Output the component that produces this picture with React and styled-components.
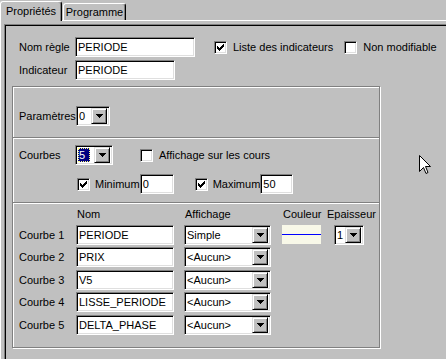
import React from 'react';
import styled, { createGlobalStyle } from 'styled-components';

const GlobalStyle = createGlobalStyle`
body {
  margin: 0;
  font-family: 'Liberation Sans', Arial, sans-serif;
  font-size: 11px;
  color: #000;
}
`;

const Screen = styled.div`
position: relative;
width: 446px;
height: 359px;
overflow: hidden;
background: #c0c0c0;
`;

const TabStrip = styled.div`
position: relative;
z-index: 1;
display: flex;
align-items: flex-end;
height: 20px;
`;

const Tab = styled.div`
box-sizing: border-box;
display: flex;
align-items: center;
justify-content: center;
width: ${(p) => (p.$active ? '62px' : '63px')};
height: ${(p) => (p.$active ? '20px' : '17px')};
margin-bottom: ${(p) => (p.$active ? '-1px' : '0')};
margin-left: ${(p) => (p.$active ? '0' : '1px')};
padding-bottom: ${(p) => (p.$active ? '2px' : '0')};
border-top: 1px solid #fff;
border-left: 1px solid #fff;
border-right: 1px solid #000;
box-shadow: inset -1px 0 0 #808080;
border-radius: 3px 3px 0 0;
background: #c0c0c0;
white-space: nowrap;
`;

const TabPage = styled.div`
border-top: 1px solid #fff;
border-left: 1px solid #fff;
padding: 3px 0 0 3px;
`;

const Sunken = styled.div`
box-sizing: border-box;
width: 470px;
height: 360px;
border: 1px solid;
border-color: #808080 #fff #fff #808080;
box-shadow: inset 1px 1px 0 #000;
padding-top: 12px;
`;

const TopForm = styled.div`
display: flex;
flex-direction: column;
gap: 3px;
padding-left: 14px;
`;

const Row = styled.div`
display: flex;
align-items: center;
height: 20px;
margin-top: ${(p) => p.$mt || 0}px;
padding-left: ${(p) => p.$pl || 0}px;
`;

const Label = styled.span`
width: ${(p) => p.$w}px;
flex: none;
white-space: nowrap;
`;

const Field = styled.div`
box-sizing: border-box;
display: flex;
align-items: center;
width: ${(p) => p.$w}px;
height: 20px;
flex: none;
margin-left: ${(p) => p.$ml || 0}px;
padding-left: 2px;
background: #fff;
border: 1px solid;
border-color: #808080 #fff #fff #808080;
box-shadow: inset 1px 1px 0 #000, inset -1px -1px 0 #dfdfdf;
white-space: nowrap;
overflow: hidden;
`;

const Combo = styled(Field)`
padding: 2px;
`;

const ComboValue = styled.div`
flex: 1;
align-self: stretch;
display: flex;
align-items: center;
`;

const Highlight = styled.span`
display: flex;
align-items: center;
height: 100%;
padding: 0 5px 0 1px;
background: #000080;
color: #fff;
outline: 1px dotted #ffff80;
outline-offset: -1px;
`;

const DropButton = styled.div`
box-sizing: border-box;
width: 16px;
height: 16px;
flex: none;
display: flex;
align-items: center;
justify-content: center;
background: #c0c0c0;
border: 1px solid;
border-color: #dfdfdf #000 #000 #dfdfdf;
box-shadow: inset 1px 1px 0 #fff, inset -1px -1px 0 #808080;
`;

const CheckWrap = styled.label`
display: flex;
align-items: center;
gap: ${(p) => p.$gap || 6}px;
margin-left: ${(p) => p.$ml || 0}px;
white-space: nowrap;
`;

const Box = styled.span`
box-sizing: border-box;
width: 13px;
height: 13px;
display: flex;
align-items: center;
justify-content: center;
background: #fff;
border: 1px solid;
border-color: #808080 #fff #fff #808080;
box-shadow: inset 1px 1px 0 #000, inset -1px -1px 0 #dfdfdf;
`;

const GroupStack = styled.div`
box-sizing: border-box;
width: 368px;
margin: 6px 0 0 7px;
border: 1px solid #808080;
box-shadow: 1px 1px 0 #fff, inset 1px 1px 0 #fff;
`;

const Section = styled.div`
box-sizing: border-box;
height: ${(p) => p.$h}px;
padding: ${(p) => p.$pt}px 0 0 6px;
${(p) => (p.$sep ? 'border-top: 1px solid #808080; box-shadow: inset 0 1px 0 #fff;' : '')}
`;

const CurveGrid = styled.div`
display: grid;
grid-template-columns: 57px 108px 98px 44px 50px;
grid-template-rows: 17px repeat(5, 20px);
row-gap: 2.5px;
align-items: center;
`;

const Head = styled.span`
padding-left: 1px;
white-space: nowrap;
`;

const Swatch = styled.div`
width: 39px;
height: 19px;
background: #f8f8e8;
display: flex;
align-items: center;
&::after {
  content: '';
  width: 100%;
  height: 1px;
  background: #0000ff;
}
`;

const Pointer = styled.svg`
position: absolute;
left: 419px;
top: 155px;
`;

function Arrow() {
  return (
    <svg width="7" height="4" viewBox="0 0 7 4">
      <path d="M0 0H7V1H6V2H5V3H4V4H3V3H2V2H1V1H0Z" fill="#000" />
    </svg>
  );
}

function Dropdown({ w, value, selected, ml }) {
  return (
    <Combo $w={w} $ml={ml}>
      <ComboValue>{selected ? <Highlight>{value}</Highlight> : value}</ComboValue>
      <DropButton><Arrow /></DropButton>
    </Combo>
  );
}

function Check({ checked, label, ml, gap }) {
  return (
    <CheckWrap $ml={ml} $gap={gap}>
      <Box>
        {checked && (
          <svg width="7" height="7" viewBox="0 0 7 7">
            <path d="M0 2H1V3H2V4H3V3H4V2H5V1H6V0H7V3H6V4H5V5H4V6H3V7H2V6H1V5H0Z" fill="#000" />
          </svg>
        )}
      </Box>
      {label}
    </CheckWrap>
  );
}

const curves = [
  { name: 'PERIODE', mode: 'Simple' },
  { name: 'PRIX', mode: '<Aucun>' },
  { name: 'V5', mode: '<Aucun>' },
  { name: 'LISSE_PERIODE', mode: '<Aucun>' },
  { name: 'DELTA_PHASE', mode: '<Aucun>' },
];

export default function App() {
  return (
    <Screen>
      <GlobalStyle />
      <TabStrip>
        <Tab $active>Propriétés</Tab>
        <Tab>Programme</Tab>
      </TabStrip>
      <TabPage>
        <Sunken>
          <TopForm>
            <Row>
              <Label $w={56}>Nom règle</Label>
              <Field $w={120}>PERIODE</Field>
              <Check checked label="Liste des indicateurs" ml={19} />
              <Check label="Non modifiable" ml={11} />
            </Row>
            <Row>
              <Label $w={56}>Indicateur</Label>
              <Field $w={100}>PERIODE</Field>
            </Row>
          </TopForm>
          <GroupStack>
            <Section $h={50} $pt={19}>
              <Row>
                <Label $w={57}>Paramètres</Label>
                <Dropdown w={34} value="0" />
              </Row>
            </Section>
            <Section $h={65} $pt={7} $sep>
              <Row>
                <Label $w={56}>Courbes</Label>
                <Dropdown w={38} value="5" selected />
                <Check label="Affichage sur les cours" ml={27} />
              </Row>
              <Row $mt={9} $pl={58}>
                <Check checked label="Minimum" gap={5} />
                <Field $w={34} $ml={0}>0</Field>
                <Check checked label="Maximum" ml={21} gap={5} />
                <Field $w={33} $ml={0}>50</Field>
              </Row>
            </Section>
            <Section $h={145} $pt={2} $sep>
              <CurveGrid>
                <span />
                <Head>Nom</Head>
                <Head>Affichage</Head>
                <Head>Couleur</Head>
                <Head>Epaisseur</Head>
                {curves.map((c, i) => (
                  <React.Fragment key={c.name}>
                    <Label>{`Courbe ${i + 1}`}</Label>
                    <Field $w={98}>{c.name}</Field>
                    <Dropdown w={87} value={c.mode} />
                    {i === 0 ? <Swatch /> : <span />}
                    {i === 0 ? <Dropdown w={30} value="1" ml={8} /> : <span />}
                  </React.Fragment>
                ))}
              </CurveGrid>
            </Section>
          </GroupStack>
        </Sunken>
      </TabPage>
      <Pointer width="13" height="21" viewBox="0 0 13 21">
        <path d="M0.5 0.5V16.5L4.5 12.5L7 18.5L9 17.5L6.5 11.5H11.5Z" fill="#fff" stroke="#000" strokeWidth="1" />
      </Pointer>
    </Screen>
  );
}
